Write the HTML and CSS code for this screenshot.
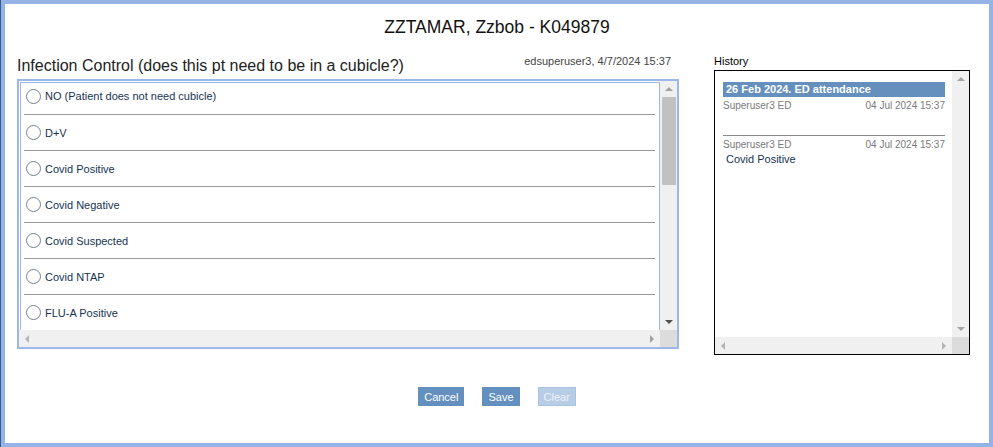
FILE: index.html
```html
<!DOCTYPE html>
<html>
  <head>
    <title>Infection Control</title>
    <link rel="stylesheet" href="styles.css">
  </head>
  <body>
  <div id="dialog">
    <div id="title">ZZTAMAR, Zzbob - K049879</div>
    <div id="main">
      <div id="question">
        <div class="qhead">
          <span class="qtext">Infection Control (does this pt need to be in a cubicle?)</span>
          <span class="stamp">edsuperuser3, 4/7/2024 15:37</span>
        </div>
        <div class="listbox scrollpane">
          <div class="items">
            <label class="opt"><input type="radio" name="ic"> NO (Patient does not need cubicle)</label>
            <label class="opt"><input type="radio" name="ic"> D+V</label>
            <label class="opt"><input type="radio" name="ic"> Covid Positive</label>
            <label class="opt"><input type="radio" name="ic"> Covid Negative</label>
            <label class="opt"><input type="radio" name="ic"> Covid Suspected</label>
            <label class="opt"><input type="radio" name="ic"> Covid NTAP</label>
            <label class="opt"><input type="radio" name="ic"> FLU-A Positive</label>
          </div>
          <div class="vbar">
            <div class="sbtn"><span class="tri-up"></span></div>
            <div class="track"><div class="thumb"></div></div>
            <div class="sbtn"><span class="tri-down dark"></span></div>
          </div>
          <div class="hbar">
            <div class="sbtn"><span class="tri-left"></span></div>
            <div class="track"></div>
            <div class="sbtn"><span class="tri-right mid"></span></div>
          </div>
          <div class="corner"></div>
        </div>
      </div>
      <div id="history">
        <div class="hlabel">History</div>
        <div class="histbox scrollpane">
          <div class="hcontent">
            <div class="hhead">26 Feb 2024. ED attendance</div>
            <div class="hmeta"><span>Superuser3 ED</span><span>04 Jul 2024 15:37</span></div>
            <div class="hentry">
              <div class="hmeta"><span>Superuser3 ED</span><span>04 Jul 2024 15:37</span></div>
              <div class="hvalue">Covid Positive</div>
            </div>
          </div>
          <div class="vbar">
            <div class="sbtn"><span class="tri-up"></span></div>
            <div class="track"></div>
            <div class="sbtn"><span class="tri-down"></span></div>
          </div>
          <div class="hbar">
            <div class="sbtn"><span class="tri-left"></span></div>
            <div class="track"></div>
            <div class="sbtn"><span class="tri-right"></span></div>
          </div>
          <div class="corner"></div>
        </div>
      </div>
    </div>
    <div id="buttons">
      <button class="btn">Cancel</button>
      <button class="btn">Save</button>
      <button class="btn disabled" disabled>Clear</button>
    </div>
  </div>
  </body>
</html>
```

FILE: styles.css
```css
html, body {
  margin: 0;
  height: 100%;
  }
body {
  background: #fff;
  border-left: 1px solid #3a5a8c;
  box-sizing: border-box;
  font: 11px "Liberation Sans", Arial, sans-serif;
  color: #000;
  }
#dialog {
  height: 447px;
  box-sizing: border-box;
  border: 4px solid #95b3e5;
  }
#title {
  height: 46px;
  line-height: 46px;
  text-align: center;
  font-size: 17.5px;
  color: #111;
  }
#main {
  display: flex;
  padding-left: 12px;
  }
#question {
  width: 662px;
  }
.qhead {
  display: flex;
  justify-content: space-between;
  height: 29px;
  }
.qtext {
  align-self: flex-end;
  font-size: 16px;
  line-height: 20px;
  padding-bottom: 3px;
  color: #222;
  }
.stamp {
  margin-top: 4px;
  margin-right: 8px;
  line-height: 14px;
  color: #444;
  }

/* pane with drawn scrollbars */
.scrollpane {
  display: grid;
  grid-template-columns: 1fr 17px;
  grid-template-rows: 1fr 17px;
  box-sizing: border-box;
  }
.vbar {
  display: flex;
  flex-direction: column;
  background: #f0f0f0;
  }
.hbar {
  display: flex;
  background: #f0f0f0;
  }
.track {
  flex: 1;
  }
.sbtn {
  display: flex;
  align-items: center;
  justify-content: center;
  width: 17px;
  height: 16px;
  flex: none;
  }
.hbar .sbtn {
  width: 16px;
  height: 17px;
  }
.thumb {
  height: 88px;
  margin: 0 1px 0 2px;
  background: #c1c1c1;
  }
.corner {
  background: #dcdcdc;
  }
.tri-up, .tri-down {
  border-left: 4px solid transparent;
  border-right: 4px solid transparent;
  }
.tri-left, .tri-right {
  border-top: 4px solid transparent;
  border-bottom: 4px solid transparent;
  }
.tri-up { border-bottom: 4px solid #a3a3a3; }
.tri-down { border-top: 4px solid #a3a3a3; }
.tri-left { border-right: 4px solid #b4b4b4; }
.tri-right { border-left: 4px solid #b4b4b4; }
.tri-down.dark { border-top-color: #505050; }
.tri-right.mid { border-left-color: #a0a0a0; }

.listbox {
  height: 270px;
  border: 2px solid #9cb8e8;
  }
.items {
  margin: 1px 0 0 1px;
  border: 1px solid #9cb8e8;
  border-bottom: none;
  overflow: hidden;
  }
.opt {
  display: flex;
  align-items: center;
  height: 35px;
  margin: 0 4px 0 3px;
  border-bottom: 1px solid #999;
  color: #163353;
  }
.opt:first-child {
  height: 26px;
  padding-bottom: 5px;
  }
.opt input {
  -webkit-appearance: none;
  appearance: none;
  width: 15px;
  height: 15px;
  margin: 0 4px 0 2px;
  border: 1px solid #75818e;
  border-radius: 50%;
  background: #fff;
  }
#history {
  width: 256px;
  margin-left: 35px;
  }
.hlabel {
  height: 20px;
  line-height: 14px;
  padding-top: 4px;
  box-sizing: border-box;
  }
.histbox {
  height: 285px;
  border: 1px solid #000;
  }
.hcontent {
  padding: 11px 7px 0 8px;
  }
.hhead {
  height: 15px;
  line-height: 15px;
  padding-left: 3px;
  background: #6590bd;
  color: #fff;
  font-weight: bold;
  font-size: 11px;
  }
.hmeta {
  display: flex;
  justify-content: space-between;
  margin-top: 2px;
  line-height: 13px;
  font-size: 10px;
  color: #7a7a7a;
  }
.hentry {
  margin-top: 23px;
  border-top: 1px solid #888;
  padding-top: 1px;
  }
.hentry .hmeta {
  margin-top: 1px;
  }
.hvalue {
  padding: 2px 0 0 3px;
  color: #163353;
  }
#buttons {
  display: flex;
  justify-content: center;
  gap: 18px;
  margin-top: 32px;
  }
.btn {
  height: 19px;
  padding: 0 5px;
  border: 1px solid #6390be;
  background: #6390be;
  color: #fff;
  font: 11px "Liberation Sans", Arial, sans-serif;
  }
.btn.disabled {
  background: #b7cde5;
  border-color: #a9c2df;
  color: #eef3f9;
  }
```
